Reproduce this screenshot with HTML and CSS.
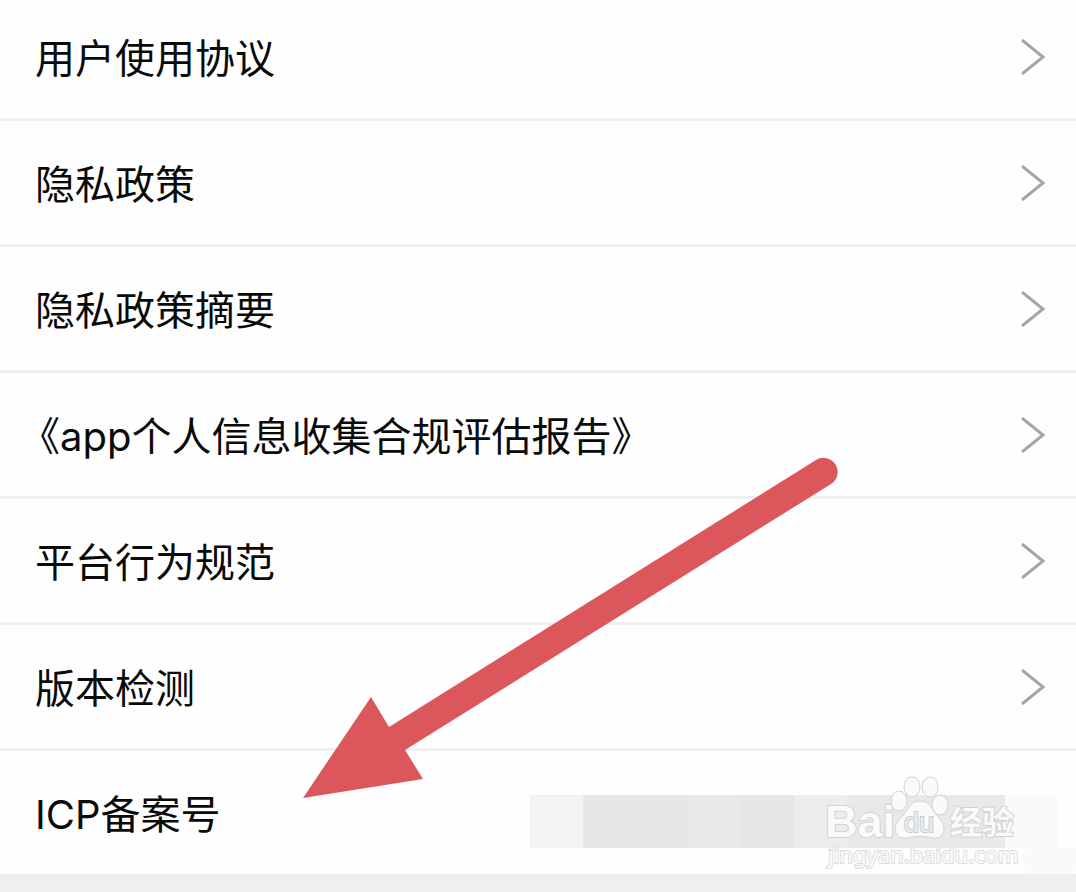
FILE: index.html
```html
<!DOCTYPE html>
<html lang="zh-CN">
<head>
    <meta charset="UTF-8">
    <meta name="viewport" content="width=device-width, initial-scale=1.0">
    <title>关于</title>
    <link rel="stylesheet" href="styles.css">
</head>
<body>
    <main class="page">
        <nav class="list">
            <a class="row" href="#agreement">用户使用协议
                <svg class="chevron" viewBox="0 0 26 36"><path d="M2 1 L23 18 L2 35"/></svg>
            </a>
            <a class="row" href="#privacy">隐私政策
                <svg class="chevron" viewBox="0 0 26 36"><path d="M2 1 L23 18 L2 35"/></svg>
            </a>
            <a class="row" href="#summary">隐私政策摘要
                <svg class="chevron" viewBox="0 0 26 36"><path d="M2 1 L23 18 L2 35"/></svg>
            </a>
            <a class="row quoted" href="#report">《app个人信息收集合规评估报告》
                <svg class="chevron" viewBox="0 0 26 36"><path d="M2 1 L23 18 L2 35"/></svg>
            </a>
            <a class="row" href="#rules">平台行为规范
                <svg class="chevron" viewBox="0 0 26 36"><path d="M2 1 L23 18 L2 35"/></svg>
            </a>
            <a class="row" href="#version">版本检测
                <svg class="chevron" viewBox="0 0 26 36"><path d="M2 1 L23 18 L2 35"/></svg>
            </a>
            <div class="row last">ICP备案号
                <div class="mosaic">
                    <span class="block light"></span>
                    <span class="block mid wide"></span>
                    <span class="block"></span>
                    <span class="block dark"></span>
                    <span class="block pale"></span>
                    <span class="block wide"></span>
                    <span class="block"></span>
                    <span class="block faint"></span>
                </div>
                <span class="smudge"></span>
                <svg class="watermark" viewBox="0 0 200 96">
                    <text class="brand" x="3" y="63">Bai</text>
                    <ellipse cx="77" cy="27" rx="8" ry="10"/>
                    <ellipse cx="90" cy="13" rx="8" ry="10"/>
                    <ellipse cx="108" cy="13" rx="8" ry="10"/>
                    <ellipse cx="118" cy="31" rx="8" ry="10"/>
                    <path d="M98 27 C90 27 87 33 83 39 C79 44 73 49 73 55 C74 63 80 65 86 64 C94 62 102 62 110 64 C117 65 122 62 122 55 C122 49 117 44 113 39 C109 33 106 27 98 27 Z"/>
                    <text class="du" x="82" y="58">du</text>
                    <text class="cn" x="128" y="60">经验</text>
                    <text class="site" x="6" y="89">jingyan.baidu.com</text>
                </svg>
            </div>
        </nav>
        <svg class="arrow" viewBox="0 0 536 342">
            <path d="M0 341 L68 240 L86 270 L513 3 A14 14 0 0 1 528 27 L102 293 L120 322 Z"/>
        </svg>
    </main>
</body>
</html>
```
FILE: styles.css
```css
body{
    margin: 0;
    background-color: #efefef;
    font-family: Inter, "Noto Sans CJK SC", sans-serif;
    color: #0a0a0a;
}

.page{
    position: relative;
    overflow: hidden;
}

/* the list is scrolled a little past its top edge */
.list{
    margin-top: -5px;
    background-color: #fefefe;
}

.row{
    position: relative;
    display: flex;
    align-items: center;
    justify-content: space-between;
    height: 119px;
    padding: 4px 30px 0 35px;
    border-bottom: 3px solid #f0f0f0;
    font-size: 40px;
    line-height: 48px;
    font-feature-settings: "halt";
    color: inherit;
    text-decoration: none;
}

.row.quoted{
    padding-left: 40px;
}

.row.last{
    border-bottom: none;
    padding-right: 18px;
}

.chevron{
    width: 26px;
    height: 36px;
    margin-bottom: 4px;
    fill: none;
    stroke: #a6a6a6;
    stroke-width: 3;
}

.mosaic{
    display: flex;
    width: 528px;
    height: 53px;
    margin-top: 14px;
}

.block{
    flex: 1;
    background-color: #e9e9e9;
}

.wide{
    flex: 2;
}

.light{
    background-color: #f3f3f3;
}

.mid{
    background-color: #e7e7e7;
}

.dark{
    background-color: #e6e6e6;
}

.pale{
    background-color: #ededed;
}

.faint{
    background-color: #fafafa;
}

.smudge{
    position: absolute;
    right: 0;
    bottom: -4px;
    width: 54px;
    height: 30px;
    border-radius: 12px 0 14px 26px;
    background-color: #fafafa;
}

.watermark{
    position: absolute;
    right: 54px;
    bottom: 4px;
    width: 200px;
    height: 96px;
    fill: #fafafa;
    stroke: #d2d2d2;
    stroke-width: 1;
}

.watermark text{
    paint-order: stroke;
    stroke-width: 2;
}

.brand{
    font: bold 45px "Liberation Sans", sans-serif;
}

.watermark .du{
    font: 27px "Liberation Sans", sans-serif;
    fill: #ebebeb;
    stroke: #cccccc;
}

.cn{
    font: bold 32px "Noto Sans CJK SC", sans-serif;
}

.watermark .site{
    font: 22px "Noto Sans", sans-serif;
    stroke: #dddddd;
}

.arrow{
    position: absolute;
    left: 303px;
    top: 457px;
    width: 536px;
    height: 342px;
    fill: #dc575c;
    pointer-events: none;
}
```
